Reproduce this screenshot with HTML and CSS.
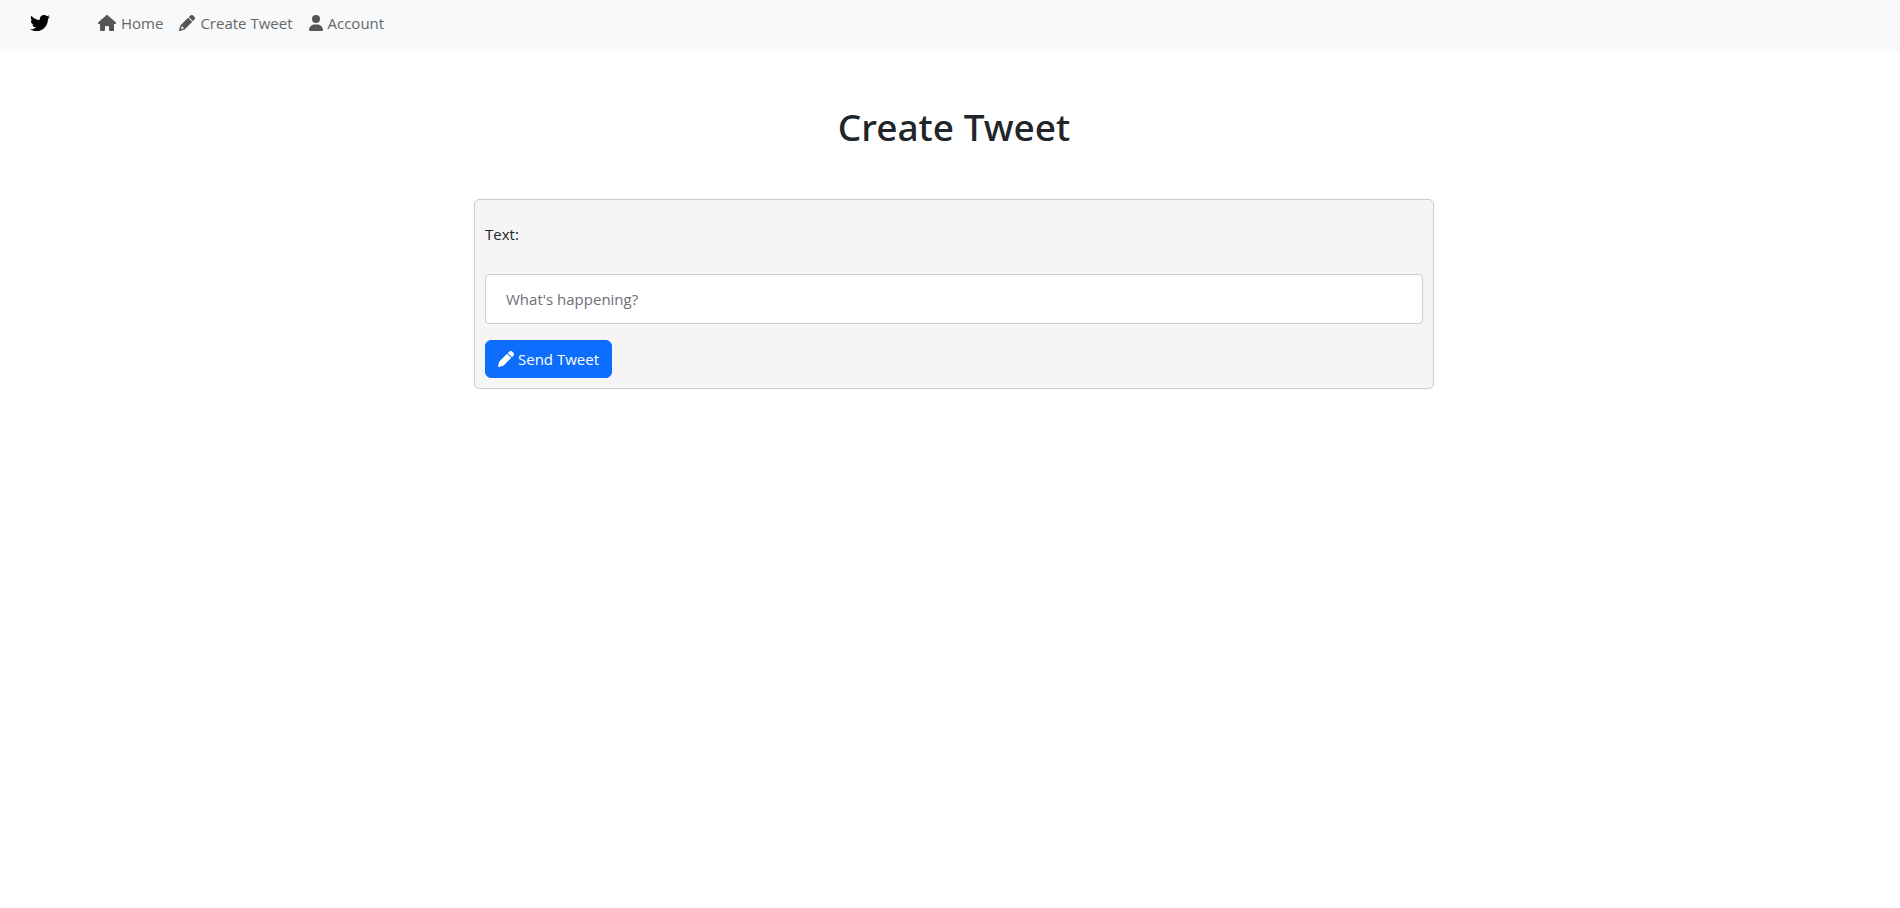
FILE: index.html
```
<!DOCTYPE html>
<html lang="en">
<head>
<meta charset="utf-8">
<meta name="viewport" content="width=device-width, initial-scale=1">
<title>Create Tweet</title>
<link rel="stylesheet" href="styles.css">
</head>
<body>
<nav class="navbar">
  <a class="brand" href="#" aria-label="Twitter">
    <svg class="brand-icon" viewBox="0 0 512 512"><path d="M459.37 151.716c.325 4.548.325 9.097.325 13.645 0 138.72-105.583 298.558-298.558 298.558-59.452 0-114.68-17.219-161.137-47.106 8.447.974 16.568 1.299 25.34 1.299 49.055 0 94.213-16.568 130.274-44.832-46.132-.975-84.792-31.188-98.112-72.772 6.498.974 12.995 1.624 19.818 1.624 9.421 0 18.843-1.3 27.614-3.573-48.081-9.747-84.143-51.98-84.143-102.985v-1.299c13.969 7.797 30.214 12.67 47.431 13.319-28.264-18.843-46.781-51.005-46.781-87.391 0-19.492 5.197-37.36 14.294-52.954 51.655 63.675 129.3 105.258 216.365 109.807-1.624-7.797-2.599-15.918-2.599-24.04 0-57.828 46.782-104.934 104.934-104.934 30.213 0 57.502 12.67 76.67 33.137 23.715-4.548 46.456-13.32 66.599-25.34-7.798 24.366-24.366 44.833-46.132 57.827 21.117-2.273 41.584-8.122 60.426-16.243-14.292 20.791-32.161 39.308-52.628 54.253z"/></svg>
  </a>
  <ul class="nav-list">
    <li><a class="nav-link" href="#"><svg class="icon icon-home" viewBox="0 0 576 512"><path d="M575.8 255.5c0 18-15 32.1-32 32.1h-32l.7 160.2c0 2.7-.2 5.4-.5 8.1V472c0 22.1-17.9 40-40 40H456c-1.1 0-2.2 0-3.3-.1c-1.4 .1-2.8 .1-4.2 .1H416 392c-22.1 0-40-17.9-40-40V448 384c0-17.7-14.3-32-32-32H256c-17.7 0-32 14.3-32 32v64 24c0 22.1-17.9 40-40 40H160 128.1c-1.5 0-3-.1-4.5-.2c-1.2 .1-2.4 .2-3.6 .2H104c-22.1 0-40-17.9-40-40V360c0-.9 0-1.9 .1-2.8V287.6H32c-18 0-32-14-32-32.1c0-9 3-17 10-24L266.4 8c7-7 15-8 22-8s15 2 21 7L564.8 231.5c8 7 12 15 11 24z"/></svg>Home</a></li>
    <li><a class="nav-link" href="#"><svg class="icon" viewBox="0 0 512 512"><path d="M410.3 231l11.3-11.3-33.9-33.9-62.1-62.1L291.7 89.8l-11.3 11.3-22.6 22.6L58.6 322.9c-10.4 10.4-18 23.3-22.2 37.4L1 480.7c-2.5 8.4-.2 17.5 6.1 23.7s15.3 8.5 23.7 6.1l120.3-35.4c14.1-4.2 27-11.8 37.4-22.2L387.7 253.7 410.3 231zM160 399.4l-9.1 22.7c-4 3.1-8.5 5.4-13.3 6.9L59.4 452l23-78.1c1.4-4.9 3.8-9.4 6.9-13.3l22.7-9.1v32c0 8.8 7.2 16 16 16h32zM362.7 18.7L348.3 33.2 325.7 55.8 314.3 67.1l33.9 33.9 62.1 62.1 33.9 33.9 11.3-11.3 22.6-22.6 14.5-14.5c25-25 25-65.5 0-90.5L453.3 18.7c-25-25-65.5-25-90.5 0z"/></svg>Create Tweet</a></li>
    <li><a class="nav-link" href="#"><svg class="icon icon-user" viewBox="0 0 448 512"><path d="M224 256A128 128 0 1 0 224 0a128 128 0 1 0 0 256zm-45.7 48C79.8 304 0 383.8 0 482.3C0 498.7 13.3 512 29.7 512H418.3c16.4 0 29.7-13.3 29.7-29.7C448 383.8 368.2 304 269.7 304H178.3z"/></svg>Account</a></li>
  </ul>
</nav>
<main class="page">
  <h1 class="title">Create Tweet</h1>
  <form class="tweet-form">
    <label class="label" for="text">Text:</label>
    <input class="text-input" id="text" type="text" placeholder="What's happening?">
    <button class="btn" type="submit"><svg class="icon" viewBox="0 0 512 512"><path d="M362.7 19.3L314.3 67.7 444.3 197.7l48.4-48.4c25-25 25-65.5 0-90.5L453.3 19.3c-25-25-65.5-25-90.5 0zm-71 71L58.6 323.5c-10.4 10.4-18 23.3-22.2 37.4L1 481.2C-1.5 489.7 .8 498.8 7 505s15.3 8.5 23.7 6.1l120.3-35.4c14.1-4.2 27-11.8 37.4-22.2L421.7 220.3 291.7 90.3z"/></svg>Send Tweet</button>
  </form>
</main>
</body>
</html>
```
FILE: styles.css
```
*, *::before, *::after { box-sizing: border-box; }

body {
  margin: 0;
  background: #fff;
  color: #212529;
  font-family: "Open Sans", "Noto Sans", sans-serif;
  font-size: 15px;
  line-height: 24px;
}

.navbar {
  display: flex;
  align-items: flex-start;
  gap: 48px;
  padding: 11px 30px 16px;
  background: #f8f9fb;
}

.brand {
  display: flex;
  align-items: center;
  height: 24px;
  color: #000;
}

.brand-icon {
  width: 20px;
  height: 20px;
  fill: currentColor;
}

.nav-list {
  display: flex;
  gap: 16px;
  margin: 0;
  padding: 0;
  list-style: none;
}

.nav-link {
  display: flex;
  align-items: center;
  gap: 5px;
  color: #666;
  text-decoration: none;
}

.nav-link .icon { color: #555; }

.icon {
  width: 16px;
  height: 16px;
  flex: none;
  fill: currentColor;
}

.icon-home { width: 18px; }
.icon-user { width: 14px; }

.page {
  padding: 52px 0 0 8px;
}

.title {
  margin: 0 0 48px;
  font-family: "Noto Sans", "Open Sans", sans-serif;
  font-size: 37px;
  font-weight: 500;
  line-height: 48px;
  text-align: center;
}

.tweet-form {
  display: flex;
  flex-direction: column;
  align-items: flex-start;
  max-width: 960px;
  margin: 0 auto;
  padding: 10px;
  background: #f5f5f5;
  border: 1px solid #ccc;
  border-radius: 5px;
}

.label {
  padding: 12px 0 28px;
}

.text-input {
  width: 100%;
  height: 50px;
  margin-bottom: 16px;
  padding: 12px 20px;
  background: #fff;
  border: 1px solid #ccc;
  border-radius: 4px;
  color: inherit;
  font: inherit;
}

.text-input::placeholder {
  color: #6c6f73;
  opacity: 1;
}

.btn {
  display: flex;
  align-items: center;
  gap: 4px;
  padding: 6px 12px;
  background: #0d6efd;
  border: 1px solid #0d6efd;
  border-radius: 6px;
  color: #fff;
  font: inherit;
  cursor: pointer;
}
```
